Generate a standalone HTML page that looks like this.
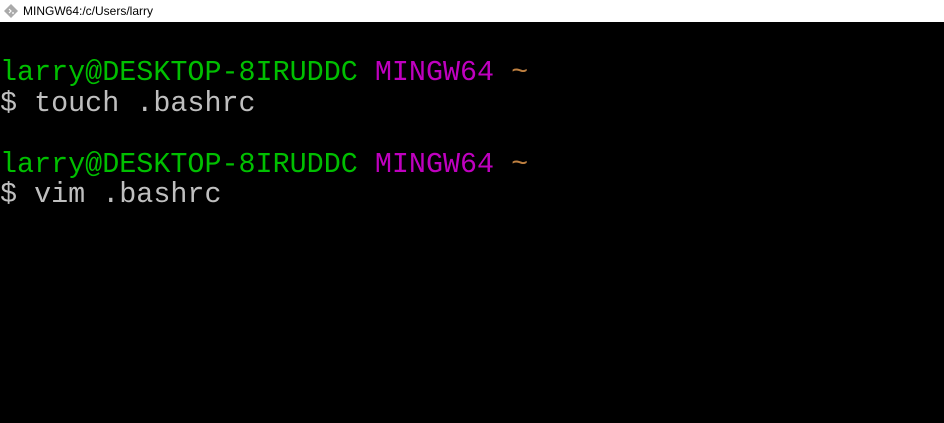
<!DOCTYPE html>
<html><head><style>
html,body{margin:0;padding:0;width:944px;height:423px;overflow:hidden;background:#000}
.title{position:absolute;left:0;top:0;width:944px;height:22px;background:#fff;font-family:"Liberation Sans",sans-serif;font-size:12px;color:#000}
.title span{position:absolute;left:23px;top:4px}
.term{position:absolute;left:0;top:58px;margin:0;font-family:"Liberation Mono",monospace;font-size:28.4px;line-height:30.5px;color:#bfbfbf;white-space:pre}
.g{color:#00bf00}.m{color:#bf00bf}.y{color:#bf8040}
</style></head><body>
<div class="title"><svg width="16" height="16" style="position:absolute;left:3px;top:3px" viewBox="0 0 16 16"><path d="M8 1L15 8L8 15L1 8Z" fill="#aaa"/><path d="M6 6L8 8L6 10M9 10L11 10" stroke="#fff" stroke-width="1.2" fill="none"/></svg><span>MINGW64:/c/Users/larry</span></div>
<pre class="term"><span class="g">larry@DESKTOP-8IRUDDC</span> <span class="m">MINGW64</span> <span class="y">~</span>
$ touch .bashrc

<span class="g">larry@DESKTOP-8IRUDDC</span> <span class="m">MINGW64</span> <span class="y">~</span>
$ vim .bashrc</pre>
</body></html>
